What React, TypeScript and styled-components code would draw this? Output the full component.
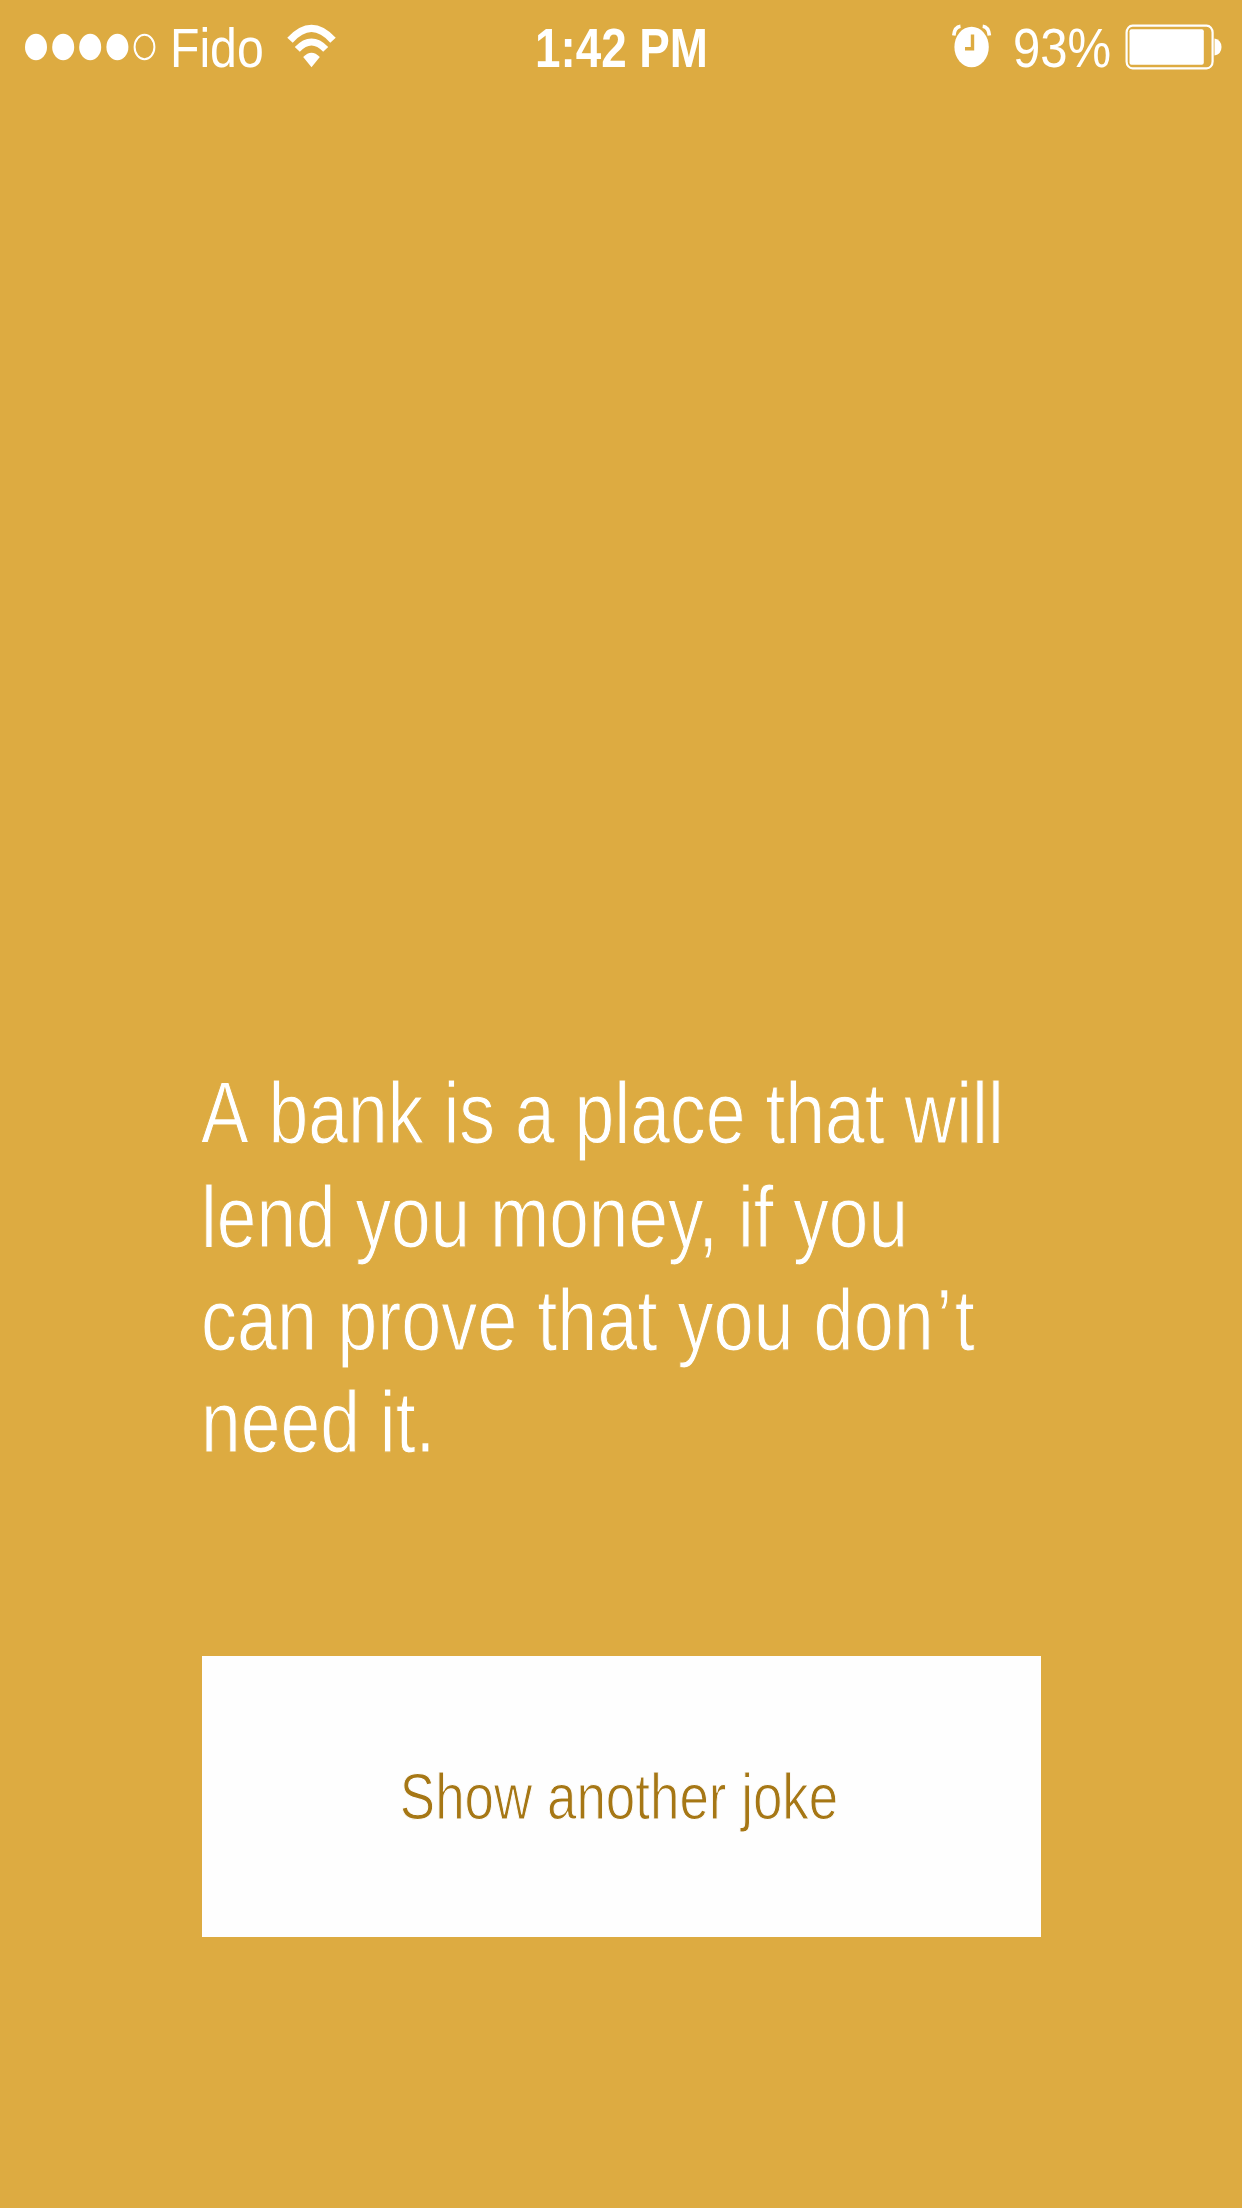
import React from 'react';
import styled, { createGlobalStyle } from 'styled-components';

const GOLD = '#ddab41';

const GlobalStyle = createGlobalStyle`
  body {
    margin: 0;
    background: ${GOLD};
    font-family: "Liberation Sans", Arial, sans-serif;
  }
`;

const Screen = styled.div`
  display: flex;
  flex-direction: column;
  width: 1242px;
  height: 2208px;
  overflow: hidden;
  background: ${GOLD};
  color: #fff;
`;

const StatusBar = styled.header`
  display: grid;
  grid-template-columns: 1fr auto 1fr;
  height: 94px;
  flex: none;
`;

const Group = styled.div<{ $align: string }>`
  display: flex;
  align-items: flex-start;
  justify-content: ${(p) => p.$align};
`;

const Signal = styled.svg`
  width: 134px;
  height: 30px;
  margin: 32px 0 0 24px;
  flex: none;
`;

const Label = styled.span<{ $width: number; $scale: number; $bold?: boolean }>`
  display: block;
  width: ${(p) => p.$width}px;
  flex: none;
  font-size: 56px;
  font-weight: ${(p) => (p.$bold ? 700 : 400)};
  line-height: 64px;
  white-space: pre;
  transform: scaleX(${(p) => p.$scale});
  transform-origin: left;
`;

const Carrier = styled(Label)`
  margin: 16px 0 0 12px;
`;

const Time = styled(Label)`
  margin: 16px 2px 0 0;
`;

const Percent = styled(Label)`
  margin: 16px 13px 0 21px;
`;

const Wifi = styled.svg`
  width: 50px;
  height: 44px;
  margin: 24px 0 0 22px;
  flex: none;
`;

const Alarm = styled.svg`
  width: 40px;
  height: 46px;
  margin-top: 23px;
  flex: none;
`;

const Battery = styled.svg`
  width: 98px;
  height: 48px;
  margin: 23px 19px 0 0;
  flex: none;
`;

const Content = styled.main`
  display: flex;
  flex-direction: column;
  padding: 967px 201px 0;
`;

const Joke = styled.p`
  margin: 0 0 181px;
  font-size: 88px;
  line-height: 103.5px;
  height: 414px;
  -webkit-text-stroke: 1.1px ${GOLD};
`;

const Line = styled.span<{ $scale: number; $lift?: number; $kern?: boolean }>`
  display: block;
  white-space: pre;
  font-kerning: ${(p) => (p.$kern === false ? 'none' : 'auto')};
  margin-top: ${(p) => -(p.$lift ?? 0)}px;
  transform: scaleX(${(p) => p.$scale});
  transform-origin: left;
`;

const Loose = styled.span`
  letter-spacing: 3px;
`;

const Button = styled.button`
  display: flex;
  align-items: center;
  justify-content: center;
  width: 839px;
  height: 281px;
  margin-left: 1px;
  padding: 0 4px 0 0;
  border: 0;
  border-radius: 0;
  background: #fefefe;
  color: #a67715;
  font: 64px "Liberation Sans", Arial, sans-serif;
`;

const ButtonText = styled.span`
  white-space: pre;
  line-height: 74px;
  transform: scaleX(0.827);
  -webkit-text-stroke: 1.1px #fefefe;
`;

export default function App() {
  return (
    <>
      <GlobalStyle />
      <Screen>
        <StatusBar>
          <Group $align="flex-start">
            <Signal viewBox="0 0 134 30">
              {[12, 39.2, 66.2, 93.4].map((x) => (
                <ellipse key={x} cx={x} cy="15" rx="11" ry="13.2" fill="#fff" />
              ))}
              <ellipse cx="120.5" cy="15" rx="9.9" ry="12.2" fill="none" stroke="#fff" strokeWidth="2" />
            </Signal>
            <Carrier $width={95} $scale={0.86}>Fido</Carrier>
            <Wifi viewBox="0 0 50 44">
              <path d="M3 16.2 Q24.5 -7.5 46 16.2" fill="none" stroke="#fff" strokeWidth="7.4" />
              <path d="M10.3 25.3 Q24.5 10.5 38.7 25.3" fill="none" stroke="#fff" strokeWidth="7" />
              <path d="M16.2 33 Q24.5 24.5 32.8 33 L24.5 43.2Z" fill="#fff" />
            </Wifi>
          </Group>
          <Time $width={170} $scale={0.817} $bold>1:42 PM</Time>
          <Group $align="flex-end">
            <Alarm viewBox="0 0 40 46">
              <ellipse cx="19.6" cy="24" rx="17.2" ry="20.2" fill="#fff" />
              <path d="M1.8 12.5 Q2.5 4 8.5 3.3 M37.4 12.5 Q36.7 4 30.7 3.3" fill="none" stroke="#fff" strokeWidth="3.6" />
              <path d="M20.5 11.5 V25.7 H13" fill="none" stroke={GOLD} strokeWidth="3.4" />
            </Alarm>
            <Percent $width={99} $scale={0.876}>93%</Percent>
            <Battery viewBox="0 0 98 48">
              <rect x="1.6" y="2.6" width="86" height="42.8" rx="6" ry="7" fill="none" stroke="#fff" strokeWidth="2.2" />
              <rect x="4.5" y="6.3" width="74.3" height="35.4" rx="2" fill="#fff" />
              <path d="M89.5 15.5 Q96.5 17 96.5 24 Q96.5 31 89.5 32.5Z" fill="#fff" />
            </Battery>
          </Group>
        </StatusBar>
        <Content>
          <Joke>
            <Line $scale={0.8125} $kern={false}>A bank is a place that will</Line>
            <Line $scale={0.809}>lend you money, if you</Line>
            <Line $scale={0.8185}>can prove that you do<Loose>n’</Loose>t</Line>
            <Line $scale={0.812} $lift={2}>need it.</Line>
          </Joke>
          <Button type="button">
            <ButtonText>Show another joke</ButtonText>
          </Button>
        </Content>
      </Screen>
    </>
  );
}
